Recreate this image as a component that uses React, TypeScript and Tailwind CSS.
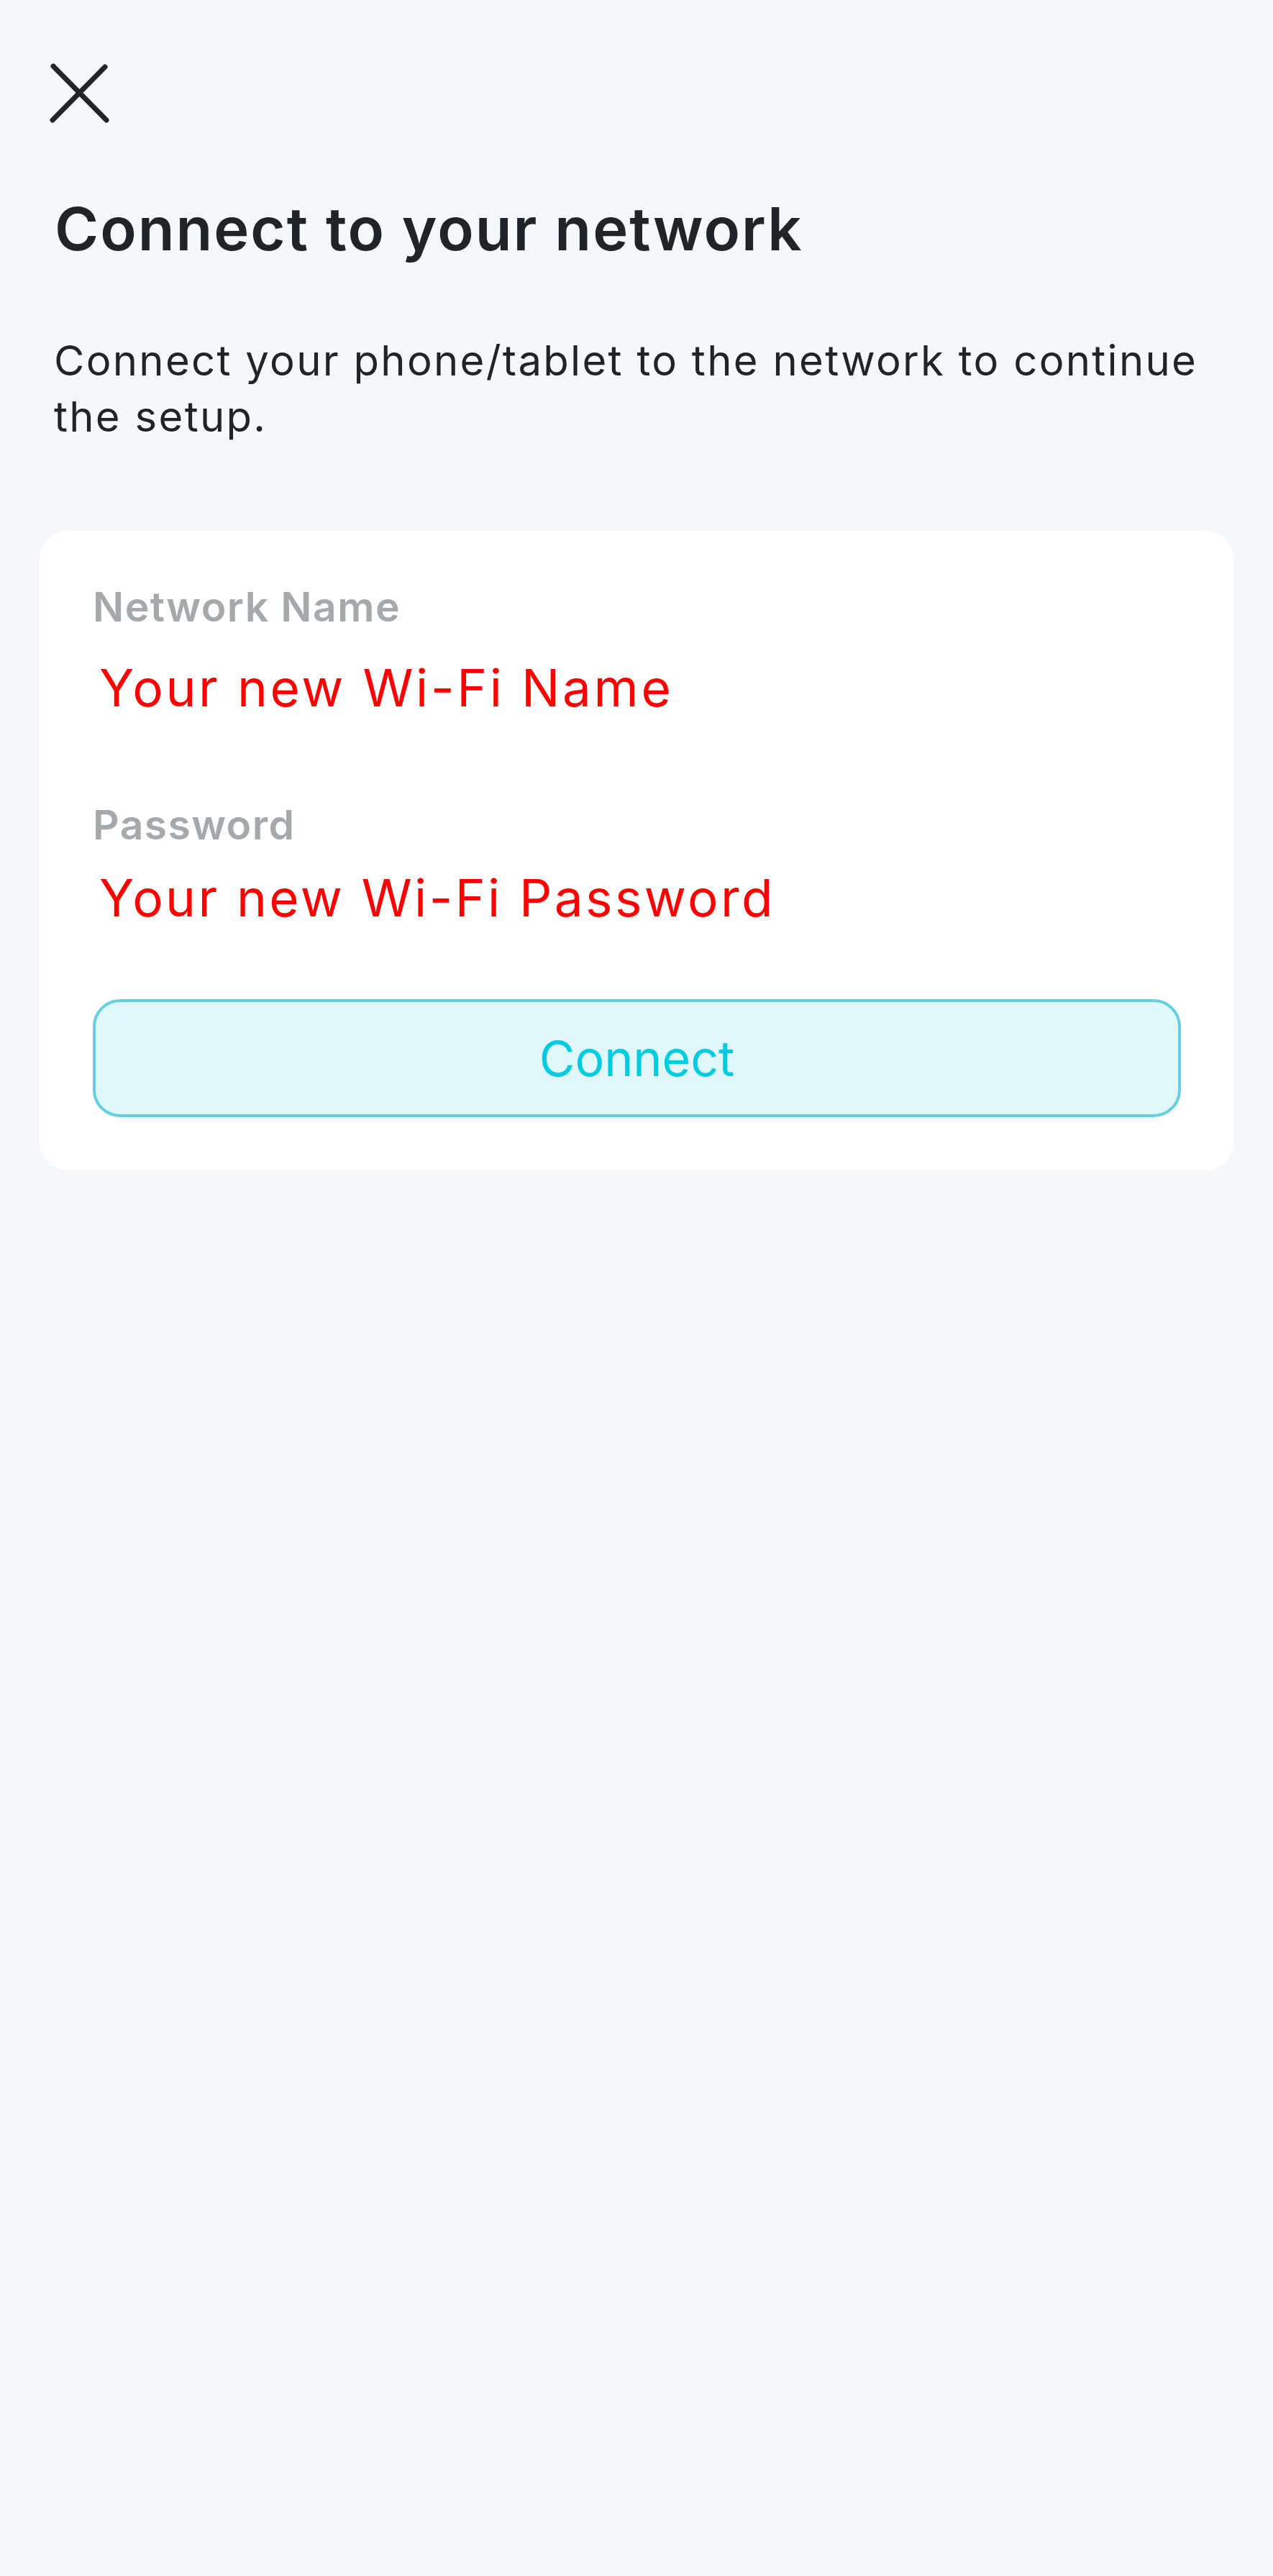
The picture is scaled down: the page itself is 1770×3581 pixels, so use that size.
import React from "react";

export default function App() {
  return (
    <div className="min-h-[3581px] w-full bg-[#f5f7fa] font-['Inter',sans-serif] text-[#1e2428]">
      <div className="pt-[80px] pl-[60px]">
        <svg width="100" height="100" viewBox="0 0 100 100" fill="none">
          <path
            d="M14 12 L88 87 M86 13 L13 87"
            stroke="#1f2529"
            strokeWidth="7"
            strokeLinecap="round"
          />
        </svg>
      </div>
      <h1 className="mt-[88px] px-[76px] text-[83px] leading-[100px] font-semibold tracking-[2px]">
        Connect to your network
      </h1>
      <p className="mt-[94px] pl-[75px] pr-[70px] text-[58px] leading-[78px] font-normal tracking-[2.3px]">
        Connect your phone/tablet to the network to continue the setup.
      </p>
      <div className="mt-[120px] ml-[55px] mr-[54px] rounded-[40px] bg-white px-[74px] pt-[71px] pb-[74px]">
        <div className="text-[57px] leading-[70px] font-semibold tracking-[1.4px] text-[#a6a9ab]">Network Name</div>
        <div className="mt-[35px] pl-[9px] text-[71px] leading-[84px] tracking-[3.6px] text-[#ff0000]">Your new Wi-Fi Name</div>
        <div className="mt-[114px] text-[57px] leading-[70px] font-semibold tracking-[1.4px] text-[#a6a9ab]">Password</div>
        <div className="mt-[24px] pl-[9px] text-[71px] leading-[84px] tracking-[3.4px] text-[#ff0000]">Your new Wi-Fi Password</div>
        <button className="mt-[99px] flex h-[164px] w-full items-center justify-center rounded-[38px] border-[4px] border-[#62d0df] bg-[#e0f8fa] text-[68px] text-[#00cbe0]">
          Connect
        </button>
      </div>
    </div>
  );
}
